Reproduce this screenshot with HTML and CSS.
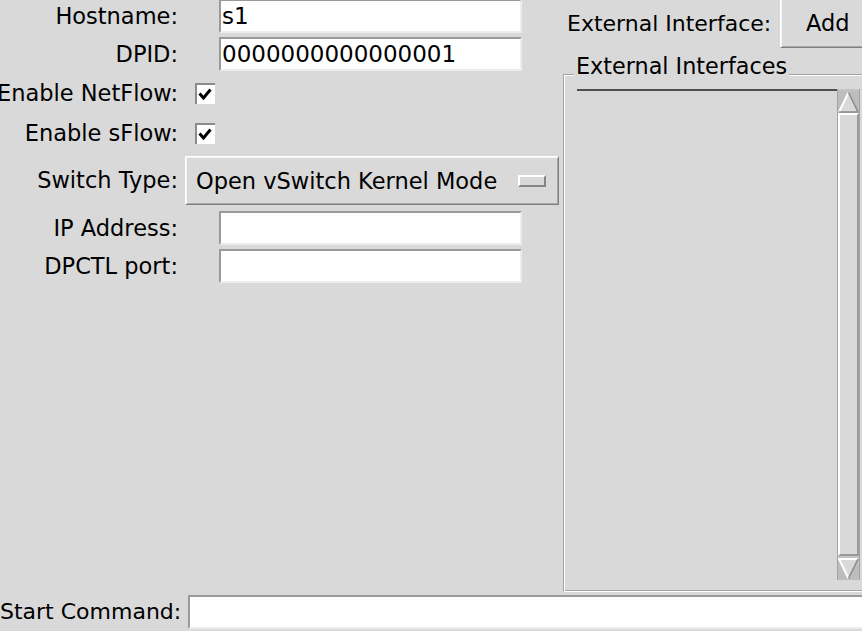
FILE: index.html
```html
<!DOCTYPE html>
<html>
<head>
<meta charset="utf-8">
<link rel="stylesheet" href="styles.css">
</head>
<body>
<div class="win">
  <div class="form">
    <div class="lbl">Hostname:</div>
    <div class="ctl"><input class="entry" type="text" value="s1"></div>
    <div class="lbl">DPID:</div>
    <div class="ctl"><input class="entry" type="text" value="0000000000000001"></div>
    <div class="lbl">Enable NetFlow:</div>
    <div class="ctl">
      <svg class="check" width="20" height="21" viewBox="0 0 20 21">
        <rect x="0" y="0" width="20" height="21" fill="#ffffff"/>
        <path d="M1 21 V1 H20" fill="none" stroke="#8c8c8c" stroke-width="2"/>
        <path d="M4.5 10.5 L8.5 15 L15.5 6.5" fill="none" stroke="#000" stroke-width="3"/>
      </svg>
    </div>
    <div class="lbl">Enable sFlow:</div>
    <div class="ctl">
      <svg class="check" width="20" height="21" viewBox="0 0 20 21">
        <rect x="0" y="0" width="20" height="21" fill="#ffffff"/>
        <path d="M1 21 V1 H20" fill="none" stroke="#8c8c8c" stroke-width="2"/>
        <path d="M4.5 10.5 L8.5 15 L15.5 6.5" fill="none" stroke="#000" stroke-width="3"/>
      </svg>
    </div>
    <div class="lbl">Switch Type:</div>
    <div class="ctl">
      <div class="menubtn"><span>Open vSwitch Kernel Mode</span><span class="indicator"></span></div>
    </div>
    <div class="lbl">IP Address:</div>
    <div class="ctl"><input class="entry" type="text" value=""></div>
    <div class="lbl">DPCTL port:</div>
    <div class="ctl"><input class="entry" type="text" value=""></div>
  </div>

  <div class="right">
    <div class="ext-head">
      <span class="ext-label">External Interface:</span>
      <div class="btn">Add</div>
    </div>
    <div class="lf">
      <div class="lf-title">External Interfaces</div>
      <div class="lf-body">
        <div class="listbox"></div>
        <div class="sb">
          <svg class="arrow" width="21" height="22" viewBox="0 0 21 22">
            <rect width="21" height="22" fill="#bdbdbd"/>
            <polygon points="10.5,1.5 1,21 20,21" fill="#d9d9d9"/>
            <path d="M10.5 1.5 L1 21" stroke="#ffffff" stroke-width="2" fill="none"/>
            <path d="M10.5 1.5 L20 21 H1" stroke="#8a8a8a" stroke-width="1.5" fill="none"/>
          </svg>
          <div class="slider"></div>
          <svg class="arrow" width="21" height="22" viewBox="0 0 21 22">
            <rect width="21" height="22" fill="#bdbdbd"/>
            <polygon points="1,1 20,1 10.5,20.5" fill="#d9d9d9"/>
            <path d="M20 1 H1 L10.5 20.5" stroke="#ffffff" stroke-width="2" fill="none"/>
            <path d="M20 1 L10.5 20.5" stroke="#8a8a8a" stroke-width="1.5" fill="none"/>
          </svg>
        </div>
      </div>
    </div>
  </div>

  <div class="bottom">
    <span class="start-label">Start Command:</span>
    <input class="entry wide" type="text" value="">
  </div>
</div>
</body>
</html>
```

FILE: styles.css
```css
* {
  box-sizing: border-box;
}

html, body {
  margin: 0;
  padding: 0;
  background: #d9d9d9;
  overflow: hidden;
}

body {
  width: 862px;
  height: 631px;
  font-family: "DejaVu Sans", sans-serif;
  font-size: 22.5px;
  color: #000;
}

.win {
  margin-top: -3px;
  width: 862px;
  height: 634px;
  display: grid;
  grid-template-columns: 563px 312px;
  grid-template-rows: 595px 39px;
}

/* ---------- left form ---------- */
.form {
  display: grid;
  grid-template-columns: 185px 374px;
  grid-template-rows: 38px 38px 41px 38px 57px 38px 38px;
  align-content: start;
}

.lbl {
  display: flex;
  align-items: center;
  justify-content: flex-end;
  padding-right: 7px;
  padding-bottom: 1px;
  white-space: nowrap;
  min-width: 0;
}

.ctl {
  display: flex;
  align-items: center;
}

.entry {
  width: 303px;
  height: 34px;
  margin: 0 0 0 34px;
  padding: 0 0 0 1px;
  font-family: "DejaVu Sans", sans-serif;
  font-size: 23px;
  color: #000;
  background: #ffffff;
  border-style: solid;
  border-width: 2px;
  border-color: #9a9a9a #ededed #ededed #9a9a9a;
  outline: none;
}

.check {
  display: block;
  margin-left: 10px;
}

.menubtn {
  width: 374px;
  height: 49px;
  display: flex;
  align-items: center;
  justify-content: space-between;
  padding: 0 12px 0 10px;
  border: 1px solid;
  border-color: #ffffff #7e7e7e #7e7e7e #ffffff;
  box-shadow: inset 1px 1px 0 #f4f4f4, inset -1px -1px 0 #a9a9a9;
  white-space: nowrap;
}

.indicator {
  width: 28px;
  height: 12px;
  background: #d9d9d9;
  border: 2px solid;
  border-color: #ffffff #858585 #858585 #ffffff;
}

/* ---------- right column ---------- */
.right {
  display: flex;
  flex-direction: column;
  padding-top: 1px;
}

.ext-head {
  height: 50px;
  display: flex;
  align-items: center;
  padding-left: 4px;
  white-space: nowrap;
}

.ext-label {
  width: 213px;
  flex: none;
  font-size: 22px;
}

.btn {
  height: 50px;
  display: flex;
  align-items: center;
  padding: 0 24px 0 25px;
  border: 1px solid;
  border-color: #ffffff #7e7e7e #7e7e7e #ffffff;
  box-shadow: inset 1px 1px 0 #f4f4f4, inset -1px -1px 0 #a9a9a9;
}

.lf {
  margin-top: 26px;
  flex: 1;
  display: flex;
  flex-direction: column;
  border: 1px solid;
  border-color: #a3a3a3 #ffffff #ffffff #a3a3a3;
  box-shadow: inset 1px 1px 0 #ffffff, inset -1px -1px 0 #a3a3a3;
  padding: 0 12px 11px 13px;
}

.lf-title {
  align-self: flex-start;
  margin: -22px 0 0 -3px;
  padding: 0 2px;
  line-height: 26px;
  font-size: 22.3px;
  background: #d9d9d9;
  white-space: nowrap;
}

.lf-body {
  margin-top: 10px;
  flex: 1;
  display: flex;
}

.listbox {
  width: 260px;
  border-top: 2px solid #4f4f4f;
}

.sb {
  width: 23px;
  display: flex;
  flex-direction: column;
  padding-top: 2px;
  background: #c4c4c4;
  border-left: 1px solid #a3a3a3;
  border-right: 1px solid #a3a3a3;
}

.arrow {
  display: block;
}

.slider {
  flex: 1;
  margin: 0 0 2px 0;
  background: #d9d9d9;
  border: 2px solid;
  border-color: #ffffff #9a9a9a #9a9a9a #ffffff;
}

/* ---------- bottom row ---------- */
.bottom {
  grid-column: 1 / span 2;
  display: flex;
  align-items: center;
  white-space: nowrap;
}

.start-label {
  width: 184px;
  flex: none;
  font-size: 22px;
}

.entry.wide {
  width: 700px;
  flex: none;
  margin-left: 4px;
}
```
